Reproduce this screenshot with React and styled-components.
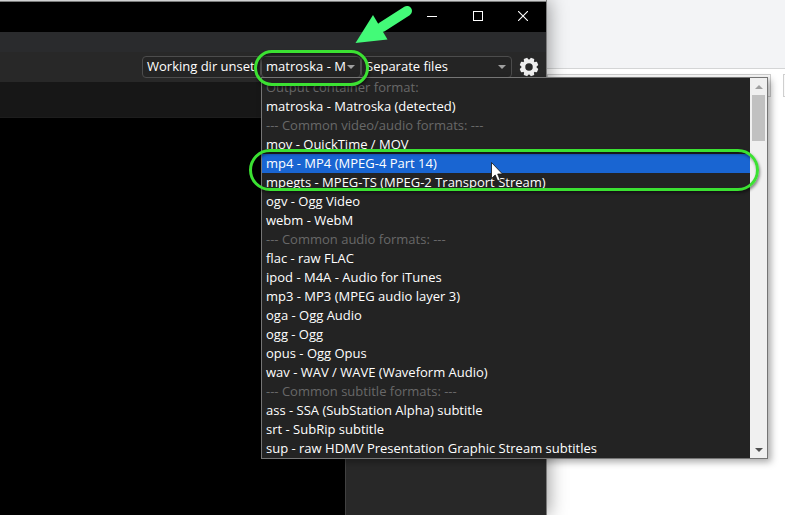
import React from 'react';
import styled, { createGlobalStyle } from 'styled-components';

const Global = createGlobalStyle`
  * { box-sizing: border-box; }
  html, body { margin: 0; padding: 0; overflow: hidden; background: #fff; }
`;

const Desktop = styled.main`
  position: relative;
  display: flex;
  width: 785px;
  height: 515px;
  overflow: hidden;
  background: #fff;
  font-family: 'Open Sans', 'Noto Sans', sans-serif;
  font-size: 13px;
  color: #fff;
`;

const AppWindow = styled.section`
  position: relative;
  z-index: 1;
  display: flex;
  flex-direction: column;
  flex: 0 0 547px;
  min-width: 0;
  background: #000;
  border-right: 1px solid #7b7b7b;
  box-shadow: 2px 0 17px rgba(0, 0, 0, 0.38);
`;

const TopEdge = styled.div`
  height: 2px;
  background: linear-gradient(#d0d1d2 50%, #7b7c7c 50%);
`;

const TitleBar = styled.header`
  display: flex;
  justify-content: flex-end;
  height: 30px;
  background: #000;
`;

const CaptionButton = styled.div`
  display: flex;
  align-items: center;
  justify-content: center;
  width: 45.5px;
  height: 28px;
`;

const Toolbar = styled.div`
  display: flex;
  height: 50px;
  padding: 24px 7px 0 142px;
  background: linear-gradient(#2a2b2d 0 20px, #282828 20px);
`;

const Control = styled.div`
  display: flex;
  align-items: center;
  justify-content: space-between;
  flex: 0 0 ${(p) => p.$width}px;
  min-width: 0;
  height: 22px;
  padding: 0 5px 0 4px;
  border: 1px solid #4c4c4c;
  border-radius: 4px;
  background: #242424;
  white-space: nowrap;
`;

const ControlText = styled.span`
  line-height: 18px;
  padding-bottom: 2px;
`;

const GearHolder = styled.div`
  width: 20px;
  height: 20px;
  margin: 1px 0 0 7px;
`;

const Strip = styled.div`
  height: 36px;
  background: #171717;
  border-bottom: 1px solid #1d1d1d;
`;

const Workspace = styled.div`
  display: flex;
  justify-content: flex-end;
  flex: 1;
`;

const SidePanel = styled.aside`
  width: 201px;
  background: #282828;
  border-left: 1px solid #414141;
`;

const BackPage = styled.section`
  position: relative;
  flex: 1;
`;

const BackHeader = styled.div`
  height: 69px;
  background: #f3f4f6;
  border-bottom: 1px solid #d4d5d6;
`;

const BackFields = styled.div`
  display: flex;
  gap: 12px;
  margin-top: 5px;
`;

const BackField = styled.div`
  flex: 0 0 ${(p) => p.$width}px;
  height: 23px;
  border: 1px solid #cfcfcf;
  background: #fafafa;
`;

const Popup = styled.div`
  position: absolute;
  z-index: 2;
  left: 261px;
  top: 77px;
  display: flex;
  width: 507px;
  height: 382px;
  border: 1px solid #757575;
  background: #232323;
  box-shadow: 3px 3px 7px rgba(0, 0, 0, 0.34);
`;

const Options = styled.div`
  flex: 1;
`;

const Option = styled.div`
  height: 19px;
  padding-left: 4px;
  line-height: 19px;
  white-space: nowrap;
  color: ${(p) => (p.$muted ? '#686868' : '#fff')};
  background: ${(p) => (p.$active ? '#1965d2' : 'transparent')};
`;

const Scrollbar = styled.div`
  display: flex;
  flex-direction: column;
  align-items: center;
  width: 17px;
  background: #f0f0f0;
`;

const ScrollButton = styled.div`
  display: flex;
  align-items: center;
  justify-content: center;
  height: 17px;
`;

const Thumb = styled.div`
  width: 13px;
  height: 46px;
  margin-bottom: auto;
  background: #c1c1c1;
`;

const Ring = styled.div`
  position: absolute;
  z-index: 3;
  left: ${(p) => p.$x}px;
  top: ${(p) => p.$y}px;
  width: ${(p) => p.$w}px;
  height: ${(p) => p.$h}px;
  border: 3px solid #3be132;
  border-radius: 22px;
  box-shadow: 1px 2px 3px rgba(0, 0, 0, 0.45), inset 1px 2px 3px rgba(0, 0, 0, 0.4);
`;

const Overlay = styled.svg`
  position: absolute;
  z-index: 4;
  left: ${(p) => p.$x}px;
  top: ${(p) => p.$y}px;
  overflow: visible;
`;

const options = [
  ['Output container format:', true],
  ['matroska - Matroska (detected)'],
  ['--- Common video/audio formats: ---', true],
  ['mov - QuickTime / MOV'],
  ['mp4 - MP4 (MPEG-4 Part 14)'],
  ['mpegts - MPEG-TS (MPEG-2 Transport Stream)'],
  ['ogv - Ogg Video'],
  ['webm - WebM'],
  ['--- Common audio formats: ---', true],
  ['flac - raw FLAC'],
  ['ipod - M4A - Audio for iTunes'],
  ['mp3 - MP3 (MPEG audio layer 3)'],
  ['oga - Ogg Audio'],
  ['ogg - Ogg'],
  ['opus - Ogg Opus'],
  ['wav - WAV / WAVE (Waveform Audio)'],
  ['--- Common subtitle formats: ---', true],
  ['ass - SSA (SubStation Alpha) subtitle'],
  ['srt - SubRip subtitle'],
  ['sup - raw HDMV Presentation Graphic Stream subtitles'],
];

const Caret = ({ up, color = '#a0a0a0' }) => (
  <svg width="8" height="4" viewBox="0 0 8 4">
    <path d={up ? 'M0 4L4 0L8 4Z' : 'M0 0H8L4 4Z'} fill={color} />
  </svg>
);

const teeth = [0, 45, 90, 135, 180, 225, 270, 315];

const Gear = () => (
  <svg width="20" height="20" viewBox="-10 -10 20 20">
    <circle r="5.6" fill="none" stroke="#eee" strokeWidth="3.7" />
    {teeth.map((a) => (
      <path key={a} d="M-2.6 -6.6L-1.8 -9.3H1.8L2.6 -6.6Z" fill="#eee" transform={`rotate(${a + 22.5})`} />
    ))}
  </svg>
);

export default function App() {
  return (
    <Desktop>
      <Global />
      <AppWindow>
        <TopEdge />
        <TitleBar>
          <CaptionButton>
            <svg width="10" height="10"><path d="M0 5.5H10" stroke="#fff" /></svg>
          </CaptionButton>
          <CaptionButton>
            <svg width="10" height="10"><rect x=".5" y=".5" width="9" height="9" fill="none" stroke="#fff" /></svg>
          </CaptionButton>
          <CaptionButton>
            <svg width="10" height="10"><path d="M0 0L10 10M10 0L0 10" stroke="#fff" strokeWidth="1.1" /></svg>
          </CaptionButton>
        </TitleBar>
        <Toolbar>
          <Control $width={119}><ControlText>Working dir unset</ControlText></Control>
          <Control $width={100}><ControlText>matroska - M</ControlText><Caret /></Control>
          <Control $width={151}><ControlText>Separate files</ControlText><Caret /></Control>
          <GearHolder><Gear /></GearHolder>
        </Toolbar>
        <Strip />
        <Workspace><SidePanel /></Workspace>
      </AppWindow>
      <BackPage>
        <BackHeader />
        <BackFields>
          <BackField $width={224} />
          <BackField $width={30} />
        </BackFields>
      </BackPage>
      <Popup>
        <Options>
          {options.map(([label, muted], i) => (
            <Option key={label} $muted={muted} $active={i === 4}>{label}</Option>
          ))}
        </Options>
        <Scrollbar>
          <ScrollButton><Caret up /></ScrollButton>
          <Thumb />
          <ScrollButton><Caret color="#505050" /></ScrollButton>
        </Scrollbar>
      </Popup>
      <Ring $x={254} $y={50} $w={115} $h={36} />
      <Ring $x={249} $y={149} $w={510} $h={42} />
      <Overlay $x={350} $y={0} width="70" height="50">
        <path d="M57 11L32 27" stroke="#43fa78" strokeWidth="10" strokeLinecap="round" />
        <path d="M5.500 43L23 15L37.500 39.500Z" fill="#43fa78" />
      </Overlay>
      <Overlay $x={491} $y={162} width="13" height="20">
        <path d="M.5 .5V16.500L4.200 13L6.700 19L9.200 18L6.700 12H11.500Z" fill="#fff" stroke="#111" strokeWidth=".8" />
      </Overlay>
    </Desktop>
  );
}
